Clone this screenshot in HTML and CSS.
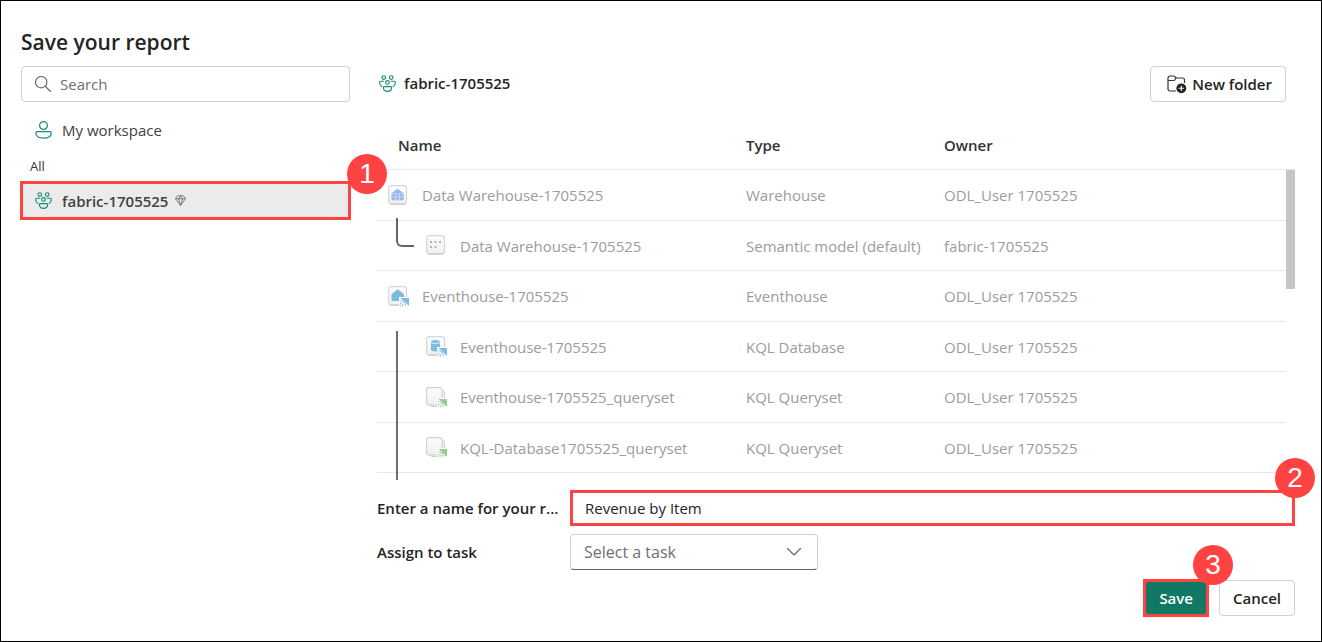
FILE: index.html
```html
<!DOCTYPE html>
<html lang="en">
<head>
<meta charset="utf-8">
<meta name="viewport" content="width=device-width, initial-scale=1">
<title>Save your report</title>
<link rel="stylesheet" href="styles.css">
</head>
<body>
<svg class="defs" aria-hidden="true">
  <defs>
    <linearGradient id="tile" x1="0" y1="0" x2="0" y2="1">
      <stop offset="0" stop-color="#fefefe"/><stop offset="1" stop-color="#efefef"/>
    </linearGradient>
    <symbol id="people" viewBox="0 0 16 16">
      <g fill="none" stroke="#1a8a74" stroke-width="1.100" stroke-linecap="round" stroke-linejoin="round">
        <circle cx="4.500" cy="2.400" r="1.700"/><circle cx="11.500" cy="2.400" r="1.700"/><circle cx="8" cy="7" r="1.700"/>
        <path d="M4.400 5.900H1.700C1 5.900.6 6.300.6 7c0 1.800.8 3.200 2.100 3.800M11.600 5.900h2.700c.7 0 1.100.4 1.100 1.100 0 1.800-.8 3.200-2.100 3.800"/>
        <path d="M5 10.900h6c.6 0 .9.300.9.900 0 2.100-1.500 3.600-3.900 3.600s-3.900-1.500-3.900-3.600c0-.6.300-.9.900-.9z"/>
      </g>
    </symbol>
    <symbol id="tile-box" viewBox="0 0 20 20">
      <rect x=".7" y=".7" width="17.800" height="18.400" rx="2.500" fill="url(#tile)" stroke="#d6d6d6" stroke-width="1.200"/>
      <path d="M2.500 19h14.300" stroke="#c4c4c4" stroke-width="1"/>
    </symbol>
    <symbol id="signal" viewBox="0 0 10 10">
      <path d="M0 0h10v10H0z" fill="#fff"/>
      <path d="M1.500 1H10v8z" fill="currentColor"/>
      <path d="M.8 3.700c3 .2 5.300 2.400 5.700 5.600M.8 6.300c1.700.2 2.900 1.400 3.100 3.100" fill="none" stroke="currentColor" stroke-width="1.100" stroke-dasharray="1.500 .5"/>
      <circle cx="1.300" cy="8.900" r=".6" fill="currentColor"/>
    </symbol>
    <symbol id="pages" viewBox="0 0 21 21">
      <path d="M16 2.500l2.500 2.500v11.500l-3 3H6L3 17.500" fill="#efefef" stroke="#cfcfcf"/>
      <rect x=".6" y=".6" width="15.400" height="17.400" rx="2.500" fill="url(#tile)" stroke="#d2d2d2" stroke-width="1.100"/>
      <use href="#signal" x="11" y="11" width="10" height="10" color="#95cb8f"/>
    </symbol>
  </defs>
</svg>
<main class="dialog">
  <h1 class="title">Save your report</h1>
  <div class="columns">
    <nav class="sidebar" aria-label="Workspaces">
      <label class="search">
        <svg width="18" height="18" viewBox="0 0 18 18" fill="none" stroke="#616161" stroke-width="1.100" stroke-linecap="round" aria-hidden="true"><circle cx="7.200" cy="7.200" r="5.700"/><path d="M11.500 11.500l5 5"/></svg>
        <input type="text" placeholder="Search" aria-label="Search">
      </label>
      <button class="nav-item" type="button">
        <svg width="17" height="18" viewBox="0 0 17 18" fill="none" stroke="#1a8a74" stroke-width="1.200" aria-hidden="true"><circle cx="8.500" cy="4.500" r="3.900"/><path d="M2.200 10.600h12.600c.9 0 1.400.5 1.400 1.400 0 3.300-2.800 5.200-7.700 5.200S.8 15.300.8 12c0-.9.5-1.400 1.400-1.400z"/></svg>
        <span>My workspace</span>
      </button>
      <h2 class="group">All</h2>
      <div class="marked">
        <button class="nav-item selected" type="button" aria-current="true">
          <svg width="17" height="17" aria-hidden="true"><use href="#people"/></svg>
          <span>fabric-1705525</span>
          <svg class="gem" width="11" height="11" viewBox="0 0 11 11" fill="none" stroke="#555" stroke-width=".7" stroke-linejoin="round" aria-hidden="true"><path d="M2.500.8h6l2 3-5 6.500-5-6.500zM.5 3.800h10M3.500 3.800l2 6.500 2-6.500M3.500 3.800l2-3 2 3"/></svg>
        </button>
        <span class="badge">1</span>
      </div>
    </nav>

    <section class="content">
      <header class="bar">
        <div class="crumb">
          <svg width="17" height="17" aria-hidden="true"><use href="#people"/></svg>
          <span>fabric-1705525</span>
        </div>
        <button class="button new-folder" type="button">
          <svg width="20" height="19" viewBox="0 0 20 19" fill="none" aria-hidden="true"><path d="M9 16H3a2 2 0 0 1-2-2V3a2 2 0 0 1 2-2h3.500c.7 0 1 .3 1.500.8L9 3h6.500a2 2 0 0 1 2 2v3M1 5.500h5.500c.6 0 1-.2 1.400-.6L9 3" stroke="#333" stroke-width="1.200"/><circle cx="14.300" cy="13.300" r="4.900" fill="#202020"/><path d="M14.300 10.700v5.200M11.700 13.300h5.200" stroke="#fff" stroke-width="1.100"/></svg>
          New folder
        </button>
      </header>

      <div class="list">
        <table class="items">
          <colgroup><col class="col-name"><col class="col-type"><col></colgroup>
          <thead>
            <tr><th scope="col" class="first">Name</th><th scope="col">Type</th><th scope="col">Owner</th></tr>
          </thead>
          <tbody>
            <tr>
              <td><div class="name"><svg width="21" height="21" viewBox="0 0 21 21" aria-hidden="true"><use href="#tile-box" width="20" height="20"/><path d="M4 8.500l5.600-4.200 5.600 4.200v6.300H4z" fill="#9ab5ea" stroke="#9ab5ea" stroke-linejoin="round"/><path d="M4 8.800h11.400M4 12h11.400M7.800 8.500v6.500M11.500 8.500v6.500" stroke="#d7e3fa" stroke-width=".7"/></svg><span>Data Warehouse-1705525</span></div></td>
              <td>Warehouse</td><td>ODL_User 1705525</td>
            </tr>
            <tr>
              <td><div class="name child"><i class="elbow"></i><svg width="21" height="21" viewBox="0 0 21 21" aria-hidden="true"><use href="#tile-box" width="20" height="20"/><g fill="#bba9dc"><rect x="4" y="6" width="2" height="2"/><rect x="8.500" y="6" width="2" height="2"/><rect x="13" y="6" width="2" height="2"/><rect x="4" y="11" width="2" height="2"/><rect x="8.500" y="11" width="2" height="2"/></g></svg><span>Data Warehouse-1705525</span></div></td>
              <td>Semantic model (default)</td><td>fabric-1705525</td>
            </tr>
            <tr>
              <td><div class="name"><svg width="21" height="21" viewBox="0 0 21 21" aria-hidden="true"><use href="#tile-box" width="20" height="20"/><path d="M4 8.200l5.800-4.500 5.600 4.500v6.300H4z" fill="#7dbbe0" stroke="#7dbbe0" stroke-linejoin="round"/><use href="#signal" x="11" y="11" width="10" height="10" color="#7dbbe0"/></svg><span>Eventhouse-1705525</span></div></td>
              <td>Eventhouse</td><td>ODL_User 1705525</td>
            </tr>
            <tr>
              <td><div class="name child"><i class="trunk trunk-start"></i><svg width="21" height="21" viewBox="0 0 21 21" aria-hidden="true"><use href="#tile-box" width="20" height="20"/><path d="M5 5.500v8.300c0 1 2 1.700 4.500 1.700s4.500-.7 4.500-1.700V5.500z" fill="#7dbbe0"/><ellipse cx="9.500" cy="5.600" rx="4.700" ry="2" fill="#7dbbe0" stroke="#fff" stroke-width=".8"/><use href="#signal" x="11" y="11" width="10" height="10" color="#7dbbe0"/></svg><span>Eventhouse-1705525</span></div></td>
              <td>KQL Database</td><td>ODL_User 1705525</td>
            </tr>
            <tr>
              <td><div class="name child"><i class="trunk"></i><svg width="21" height="21" aria-hidden="true"><use href="#pages"/></svg><span>Eventhouse-1705525_queryset</span></div></td>
              <td>KQL Queryset</td><td>ODL_User 1705525</td>
            </tr>
            <tr>
              <td><div class="name child"><i class="trunk trunk-end"></i><svg width="21" height="21" aria-hidden="true"><use href="#pages"/></svg><span>KQL-Database1705525_queryset</span></div></td>
              <td>KQL Queryset</td><td>ODL_User 1705525</td>
            </tr>
          </tbody>
        </table>
        <div class="track"><div class="thumb"></div></div>
      </div>

      <form class="form">
        <label for="report-name">Enter a name for your r...</label>
        <div class="marked-field">
          <input id="report-name" type="text" value="Revenue by Item">
          <span class="badge">2</span>
        </div>
        <label for="task">Assign to task</label>
        <div class="select">
          <select id="task"><option>Select a task</option></select>
          <svg width="16" height="10" viewBox="0 0 16 10" fill="none" stroke="#616161" stroke-width="1.100" stroke-linecap="round" stroke-linejoin="round" aria-hidden="true"><path d="M1.500 1.500L8 8l6.500-6.500"/></svg>
        </div>
      </form>

      <footer class="actions">
        <div class="marked-save">
          <button class="button primary" type="button">Save</button>
          <span class="badge">3</span>
        </div>
        <button class="button" type="button">Cancel</button>
      </footer>
    </section>
  </div>
</main>
</body>
</html>
```

FILE: styles.css
```css
* { box-sizing: border-box; }

body {
  margin: 0;
  background: #fff;
  color: #242424;
  font: 15px/20px "Open Sans", "Noto Sans", sans-serif;
}

button, input, select { font: inherit; color: inherit; }
svg { flex: none; }
.defs { position: absolute; width: 0; height: 0; }

.dialog {
  min-height: 100vh;
  padding: 26px 26px 24px 20px;
  border: 1px solid #000;
}

.title {
  margin: 0 0 9px;
  font-size: 21px;
  line-height: 30px;
  font-weight: 600;
}

.columns { display: flex; gap: 27px; }

/* Sidebar */
.sidebar { flex: 0 0 329px; }

.search {
  display: flex;
  align-items: center;
  gap: 8px;
  height: 36px;
  padding: 0 12px;
  border: 1px solid #d1d1d1;
  border-radius: 4px;
}

.search input {
  flex: 1;
  min-width: 0;
  padding: 0;
  border: 0;
  outline: 0;
  background: none;
}

.search input::placeholder { color: #707070; opacity: 1; }

.nav-item {
  display: flex;
  align-items: center;
  gap: 10px;
  width: 100%;
  height: 32px;
  margin-top: 12px;
  padding: 0 14px;
  border: 0;
  background: none;
  color: #424242;
  text-align: left;
}

.group {
  margin: 10px 0 5px 9px;
  font-size: 13px;
  line-height: 20px;
  font-weight: 400;
  color: #333;
}

.marked {
  position: relative;
  margin: 0 -1px;
  border: 3px solid #ff4343;
}

.selected {
  height: 33px;
  margin: 0;
  padding: 0 12px;
  background: #ebebeb;
  font-weight: 600;
}

.gem { margin-left: -3px; }

.badge {
  position: absolute;
  z-index: 1;
  display: grid;
  place-items: center;
  width: 40px;
  height: 40px;
  border-radius: 50%;
  background: #ff4343;
  color: #fff;
  font: 28px/40px "Liberation Sans", Arial, sans-serif;
}

.marked .badge { top: -30px; right: -39px; }

/* Item list */
.content { flex: 1; min-width: 0; }

.bar {
  display: flex;
  justify-content: space-between;
  align-items: center;
  padding-right: 9px;
}

.crumb {
  display: flex;
  align-items: center;
  gap: 8px;
  padding: 0 0 2px 2px;
  font-weight: 600;
}

.button {
  display: flex;
  align-items: center;
  justify-content: center;
  gap: 5px;
  height: 36px;
  padding: 0 13px;
  border: 1px solid #d1d1d1;
  border-radius: 4px;
  background: #fff;
  font-weight: 600;
}

.new-folder { padding-left: 16px; }

.list {
  display: flex;
  height: 378px;
}

.items {
  flex: 1;
  height: max-content;
  table-layout: fixed;
  border-collapse: separate;
  border-spacing: 0;
  color: #9c9c9c;
}

.col-name { width: 369px; }
.col-type { width: 198px; }

.items th, .items td {
  padding: 0;
  border-bottom: 1px solid #e8e8e8;
  text-align: left;
}

.items th {
  height: 68px;
  padding-top: 18px;
  color: #333;
  font-weight: 600;
}

.items .first { padding-left: 21px; }
.items tr:nth-child(odd) td { height: 51px; }
.items tr:nth-child(even) td { height: 50px; }

.name {
  position: relative;
  display: flex;
  align-items: center;
  gap: 13px;
  height: 49px;
  padding-left: 11px;
}

.child { padding-left: 49px; }

.elbow {
  position: absolute;
  top: -3px;
  left: 19px;
  width: 18px;
  height: 29px;
  border: solid #666;
  border-width: 0 0 2px 2px;
  border-bottom-left-radius: 6px;
}

.trunk {
  position: absolute;
  top: -1px;
  bottom: -1px;
  left: 19px;
  width: 2px;
  background: #6e6e6e;
}

.trunk-start { top: 9px; }
.trunk-end { bottom: -8px; }

.track {
  width: 9px;
  margin-top: 67px;
  border-top: 1px solid #e8e8e8;
}

.thumb { height: 119px; background: #c6c6c6; }

/* Form */
.form {
  display: grid;
  grid-template-columns: 179px minmax(0, 1fr);
  gap: 8px 14px;
  align-items: center;
  margin-top: 10px;
}

.form label {
  font-weight: 600;
  white-space: nowrap;
}

.marked-field { position: relative; }

.marked-field input {
  display: block;
  width: 100%;
  height: 36px;
  padding: 0 12px;
  border: 3px solid #ff4343;
  outline: 0;
  background: #fff;
}

.marked-field .badge { top: -32px; right: -20px; }

.select {
  display: grid;
  align-items: center;
  width: 248px;
}

.select > * { grid-area: 1 / 1; }

.select select {
  height: 36px;
  padding: 0 13px;
  border: 1px solid #d1d1d1;
  border-bottom-color: #616161;
  border-radius: 4px;
  appearance: none;
  background: #fff;
  color: #707070;
  font-size: 16px;
}

.select svg {
  justify-self: end;
  margin-right: 16px;
  pointer-events: none;
}

.actions {
  display: flex;
  justify-content: flex-end;
  align-items: center;
  gap: 10px;
  margin-top: 9px;
}

.marked-save {
  position: relative;
  border: 3px solid #ff4343;
  background: #ff4343;
}

.actions .primary {
  height: 32px;
  border: 0;
  border-radius: 2px;
  background: #117865;
  color: #fff;
}

.marked-save .badge { top: -37px; right: -27px; }
```
